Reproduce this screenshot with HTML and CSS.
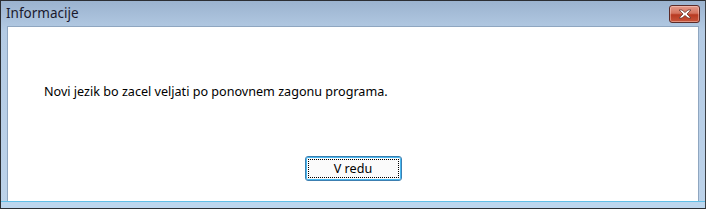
FILE: index.html
```html
<!DOCTYPE html>
<html lang="sl">
<head>
    <meta charset="UTF-8">
    <title>Informacije</title>
    <link rel="stylesheet" href="styles.css">
</head>
<body>
    <div class="window">
        <div class="titlebar">
            <div class="title">Informacije</div>
            <div class="close-btn">
                <svg width="16" height="10" viewBox="0 0 16 10">
                    <path d="M2 1 L5 1 L8 3.5 L11 1 L14 1 L10 5 L14 9 L11 9 L8 6.5 L5 9 L2 9 L6 5 Z" fill="#fff" stroke="#6a3a34" stroke-width="0.8" stroke-linejoin="round"/>
                </svg>
            </div>
        </div>
        <div class="client">
            <div class="message">Novi jezik bo zacel veljati po ponovnem zagonu programa.</div>
            <div class="button-row">
                <button class="button">V redu</button>
            </div>
        </div>
        <div class="bottom-frame"></div>
    </div>
</body>
</html>
```

FILE: styles.css
```css
body {
    margin: 0;
    padding: 0;
    background: #fff;
    font-family: "Noto Sans", "Open Sans", sans-serif;
}
.window {
    width: 706px;
    height: 209px;
    box-sizing: border-box;
    border: 1px solid #2b2e33;
    border-right-color: #3a3f45;
    background: linear-gradient(to bottom, #9bb3cf 0px, #b4cbe4 30px, #bdd3ea 100%);
    display: flex;
    flex-direction: column;
}
.titlebar {
    height: 25px;
    display: flex;
    align-items: center;
    justify-content: space-between;
    padding: 0 5px 0 5px;
}
.title {
    font-size: 13.5px;
    color: #1a1a2e;
    margin-top: -1px;
}
.close-btn {
    width: 31px;
    height: 18px;
    margin-top: 1px;
    box-sizing: border-box;
    border: 1px solid #5b2b28;
    border-radius: 3px;
    background: linear-gradient(to bottom, #e59a8a 0%, #d4745f 45%, #b83a22 55%, #c8543a 100%);
    display: flex;
    align-items: center;
    justify-content: center;
    box-shadow: inset 0 0 0 1px rgba(255,220,210,0.45);
}
.client {
    flex: 1;
    margin: 0 6px 0 6px;
    background: #fff;
    border: 1px solid #8fa6c0;
    border-bottom: none;
    display: flex;
    flex-direction: column;
}
.message {
    font-size: 12.6px;
    color: #000;
    margin: 56px 0 0 36px;
}
.button-row {
    display: flex;
    justify-content: center;
    margin-top: 56px;
}
.button {
    width: 97px;
    height: 25px;
    font-family: "Noto Sans", "Open Sans", sans-serif;
    font-size: 12.6px;
    color: #000;
    border: 1px solid #3c7fb1;
    border-radius: 3px;
    background: #fbfbfb;
    outline: 1px dotted #000;
    outline-offset: -4px;
    box-shadow: inset 0 0 0 1px #47b8f0;
    padding: 0;
}
.bottom-frame {
    height: 6px;
    background: #bcd6ee;
    border-top: 1px solid #62c0e8;
}
```
